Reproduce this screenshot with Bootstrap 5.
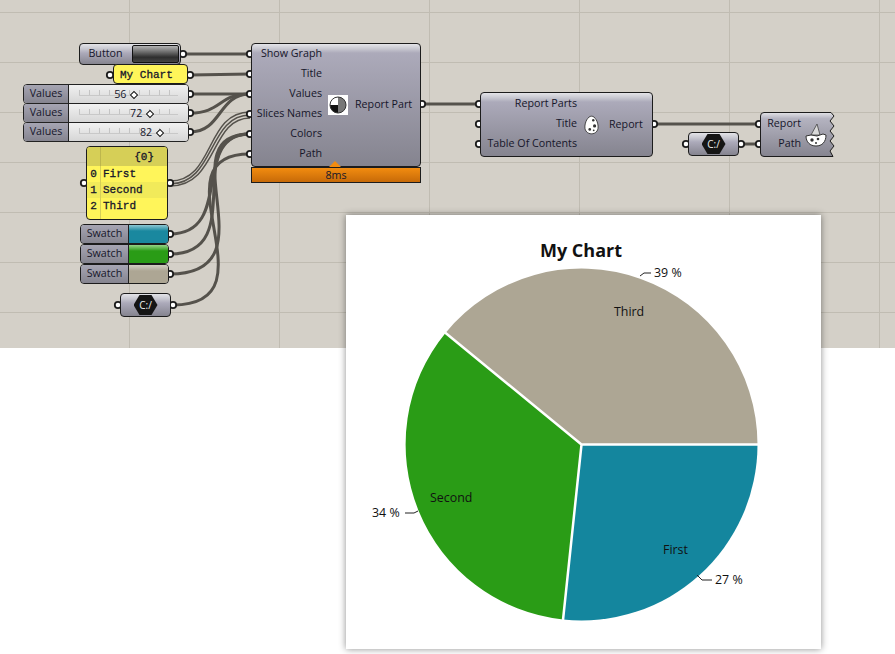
<!DOCTYPE html>
<html lang="en">
<head>
  <meta charset="UTF-8">
  <meta name="viewport" content="width=device-width, initial-scale=1.0">
  <title>My Chart</title>
  <link href="https://cdn.jsdelivr.net/npm/bootstrap@5.3.0/dist/css/bootstrap.min.css" rel="stylesheet">
  <style>
    body { background: #fff; overflow: hidden; }
    .gh-stage { position: relative; width: 895px; height: 654px; overflow: hidden; font: 10.7px/20px "Open Sans", sans-serif; color: #16162a; }
    .gh-canvas {
      height: 348px; background-color: #d4d0c8;
      background-image: linear-gradient(#c0bcb2 1px, transparent 1px), linear-gradient(90deg, #c0bcb2 1px, transparent 1px);
      background-size: 150px 50px; background-position: 129px 12px;
    }
    .gh-wires { position: absolute; left: 0; top: 0; }
    .gh-node { position: absolute; border: 1px solid #1c1c1c; border-radius: 4px; white-space: nowrap;
      background: linear-gradient(#e4e4e8 0, #c6c6cf 5px, #acaaba 9px, #85848f 100%); }
    .gh-inputs { text-align: right; }

    #n-button { left: 79px; top: 43px; width: 102px; height: 22px; line-height: 18px; }
    #n-button span { margin-top: -2px; }
    .gh-face { width: 47px; height: 18px; margin: 1px; border: 1px solid #111; border-radius: 2px; background: linear-gradient(#b4b4b4, #2e2e2e 70%, #444); }
    #n-title { left: 113px; top: 64px; width: 75px; height: 20px; background: #fff55a; font: 11px/20px "Liberation Mono", monospace; -webkit-text-stroke: .3px #16162a; padding-left: 6px; }
    .gh-slider { left: 23px; width: 166px; height: 20px; border-color: #222; background: #eee; overflow: hidden; }
    #n-s1 { top: 84px; } #n-s2 { top: 103px; } #n-s3 { top: 122px; }
    .gh-lab { background: linear-gradient(#a6a5b3, #85848f); border-right: 1px solid #222; text-align: center; }
    .gh-slider .gh-lab { width: 45px; flex: none; line-height: 17px; }
    .gh-track { position: relative; flex: 1; margin: 0 10px; line-height: 18px;
      background-image: linear-gradient(#c8c8c8, #c8c8c8), repeating-linear-gradient(90deg, #c4c4c4 0 1px, transparent 1px 10px);
      background-size: 101px 1px, 101px 5px; background-repeat: no-repeat; background-position: 0 10px, 0 5px; }
    .gh-body { flex: 1; display: flex; background: linear-gradient(#f1f1f1, #d6d6d6); }
    .gh-val { position: absolute; transform: translateX(-100%); margin-left: -8px; top: 0; }
    .gh-thumb { position: absolute; top: 7px; width: 6px; height: 6px; margin-left: -3px; background: #fff; border: 1.5px solid #111; transform: rotate(45deg); }

    #n-panel { left: 86px; top: 146px; width: 82px; height: 74px; background: #fff55a; font: 11px/17px "Liberation Mono", monospace; -webkit-text-stroke: .3px #16162a; overflow: hidden; }
    .gh-phead { height: 19px; background: #d6cf57; text-align: right; padding-right: 13px; line-height: 21px; }
    .gh-prow { height: 16px; display: flex; }
    .gh-prow.alt { background: #f1ea5a; }
    .gh-idx { width: 14px; flex: none; text-align: center; border-right: 1px solid #d6cf57; margin-right: 2px; }
    .gh-pfoot { height: 7px; width: 14px; border-right: 1px solid #d6cf57; }
    .gh-vline { position: absolute; left: 13px; top: 0; height: 19px; border-right: 1px solid #bdb64d; }

    .gh-swatch { left: 80px; width: 89px; height: 20px; overflow: hidden; }
    #n-c1 { top: 224px; } #n-c2 { top: 244px; } #n-c3 { top: 264px; }
    .gh-swatch .gh-lab { width: 48px; flex: none; line-height: 17px; }
    .gh-chip { flex: 1; }
    .gh-teal { background: linear-gradient(#8cc6d2 0, #1a889f 6px); }
    .gh-green { background: linear-gradient(#96d488 0, #2a9c16 6px); }
    .gh-tan { background: linear-gradient(#d3cfc3 0, #ada694 6px); }

    .gh-path { width: 51px; height: 24px; }
    #n-p1 { left: 120px; top: 293px; } #n-p2 { left: 688px; top: 132px; }
    .gh-hex { width: 24px; height: 20px; background: #151515; color: #eee; clip-path: polygon(25% 0, 75% 0, 100% 50%, 75% 100%, 25% 100%, 0 50%); text-align: center; font: 10px/20px "Open Sans", sans-serif; }

    #n-main { left: 251px; top: 43px; width: 170px; height: 124px; }
    #n-main .gh-inputs { width: 70px; margin-top: -5px; }
    .gh-pie-ico { width: 20px; height: 20px; background: #fff; margin: 0 7px 0 6px; }
    .gh-out { margin-top: -2px; }
    #n-bar { position: absolute; left: 251px; top: 167px; width: 170px; height: 16px; border: 1px solid #1c1c1c; background: linear-gradient(#f28c10, #c76a08); text-align: center; line-height: 15px; }
    #n-tip { position: absolute; left: 329px; top: 161px; width: 12px; height: 6px; background: #f28c10; clip-path: polygon(50% 0, 100% 100%, 0 100%); }

    #n-report { left: 480px; top: 92px; width: 173px; height: 65px; }
    #n-report .gh-inputs { width: 96px; margin-top: -3px; }
    .gh-egg { margin: 0 10px 0 7px; }

    #n-file { position: absolute; left: 760px; top: 112px; width: 75px; height: 45px; }
    #n-file svg.gh-shape { position: absolute; left: 0; top: 0; }
    #n-file .gh-inputs { position: relative; width: 41px; padding-top: 1px; }
    .gh-file-ico { position: absolute; left: 43px; top: 10px; }

    .gh-report { position: absolute; left: 346px; top: 215px; width: 475px; height: 434px; background: #fff; box-shadow: 0 0 7px rgba(0,0,0,.45); }
    .gh-report text { font-family: "Open Sans", sans-serif; font-size: 12.4px; fill: #111; }
    .gh-report .gh-ttl { font-size: 18px; font-weight: 700; }
  </style>
</head>
<body>
  <div class="gh-stage">
    <div class="gh-canvas"></div>

    <svg class="gh-wires" width="895" height="348" fill="none">
      <g stroke="#55524c" stroke-width="3">
        <path d="M183 54H250"/>
        <path d="M190 75L250 74"/>
        <path d="M190 94H250"/>
        <path d="M190 113C222 113 218 94 250 94"/>
        <path d="M190 132C222 132 218 94 250 94"/>
        <path d="M422 104H479"/>
        <path d="M654 124H759"/>
        <path d="M741 144H759"/>
        <path d="M170 234C235 234 190 134 250 134"/>
        <path d="M170 254C250 254 180 134 250 134"/>
        <path d="M170 274C275 274 165 134 250 134"/>
        <path d="M173 305C280 305 150 154 250 154"/>
      </g>
      <g stroke="#55524c" stroke-width="1.5">
        <path d="M170 181C215 181 205 112 250 112"/>
        <path d="M170 184C215 184 208 115 250 115"/>
        <path d="M170 186C218 186 210 118 250 118"/>
      </g>
      <g fill="#fff" stroke="#1c1c1c" stroke-width="1.8">
        <circle cx="183" cy="54" r="3.2"/><circle cx="110" cy="75" r="3.2"/><circle cx="190" cy="75" r="3.2"/>
        <circle cx="190" cy="94" r="3.2"/><circle cx="190" cy="113" r="3.2"/><circle cx="190" cy="132" r="3.2"/>
        <circle cx="84" cy="183" r="3.2"/><circle cx="170" cy="183" r="3.2"/>
        <circle cx="170" cy="234" r="3.2"/><circle cx="170" cy="254" r="3.2"/><circle cx="170" cy="274" r="3.2"/>
        <circle cx="118" cy="305" r="3.2"/><circle cx="173" cy="305" r="3.2"/>
        <circle cx="250" cy="54" r="3.2"/><circle cx="250" cy="74" r="3.2"/><circle cx="250" cy="94" r="3.2"/>
        <circle cx="250" cy="114" r="3.2"/><circle cx="250" cy="134" r="3.2"/><circle cx="250" cy="154" r="3.2"/>
        <circle cx="422" cy="104" r="3.2"/>
        <circle cx="479" cy="104" r="3.2"/><circle cx="479" cy="124" r="3.2"/><circle cx="479" cy="144" r="3.2"/><circle cx="654" cy="124" r="3.2"/>
        <circle cx="686" cy="144" r="3.2"/><circle cx="741" cy="144" r="3.2"/>
        <circle cx="759" cy="124" r="3.2"/><circle cx="759" cy="144" r="3.2"/>
      </g>
    </svg>

    <div class="gh-node d-flex align-items-center" id="n-button">
      <span class="flex-grow-1 text-center">Button</span>
      <div class="gh-face"></div>
    </div>
    <div class="gh-node" id="n-title">My Chart</div>

    <div class="gh-node gh-slider d-flex" id="n-s1">
      <div class="gh-lab">Values</div>
      <div class="gh-body"><div class="gh-track"><span class="gh-val" style="left:56%">56</span><span class="gh-thumb" style="left:56%"></span></div></div>
    </div>
    <div class="gh-node gh-slider d-flex" id="n-s2">
      <div class="gh-lab">Values</div>
      <div class="gh-body"><div class="gh-track"><span class="gh-val" style="left:72%">72</span><span class="gh-thumb" style="left:72%"></span></div></div>
    </div>
    <div class="gh-node gh-slider d-flex" id="n-s3">
      <div class="gh-lab">Values</div>
      <div class="gh-body"><div class="gh-track"><span class="gh-val" style="left:82%">82</span><span class="gh-thumb" style="left:82%"></span></div></div>
    </div>

    <div class="gh-node" id="n-panel">
      <div class="gh-vline"></div>
      <div class="gh-phead">{0}</div>
      <div class="gh-prow"><span class="gh-idx">0</span>First</div>
      <div class="gh-prow alt"><span class="gh-idx">1</span>Second</div>
      <div class="gh-prow"><span class="gh-idx">2</span>Third</div>
      <div class="gh-pfoot"></div>
    </div>

    <div class="gh-node gh-swatch d-flex" id="n-c1"><div class="gh-lab">Swatch</div><div class="gh-chip gh-teal"></div></div>
    <div class="gh-node gh-swatch d-flex" id="n-c2"><div class="gh-lab">Swatch</div><div class="gh-chip gh-green"></div></div>
    <div class="gh-node gh-swatch d-flex" id="n-c3"><div class="gh-lab">Swatch</div><div class="gh-chip gh-tan"></div></div>

    <div class="gh-node gh-path d-flex align-items-center justify-content-center" id="n-p1"><div class="gh-hex">C:/</div></div>

    <div class="gh-node d-flex align-items-center" id="n-main">
      <div class="gh-inputs">
        <div>Show Graph</div><div>Title</div><div>Values</div><div>Slices Names</div><div>Colors</div><div>Path</div>
      </div>
      <div class="gh-pie-ico d-flex align-items-center justify-content-center">
        <svg width="18" height="18" viewBox="0 0 18 18">
          <circle cx="9" cy="9" r="8" fill="#fff"/>
          <path d="M9 1A8 8 0 0 1 9 17Z" fill="#777"/>
          <path d="M9 9V17A8 8 0 0 1 1 9Z" fill="#111"/>
          <circle cx="9" cy="9" r="8" fill="none" stroke="#333" stroke-width="1"/>
        </svg>
      </div>
      <div class="gh-out">Report Part</div>
    </div>
    <div id="n-tip"></div>
    <div id="n-bar">8ms</div>

    <div class="gh-node d-flex align-items-center" id="n-report">
      <div class="gh-inputs"><div>Report Parts</div><div>Title</div><div>Table Of Contents</div></div>
      <svg class="gh-egg" width="15" height="20" viewBox="0 0 17 22">
        <path d="M8.5 1C12.5 1 16 7.5 16 13.2C16 18 12.8 21 8.5 21C4.2 21 1 18 1 13.2C1 7.5 4.5 1 8.5 1Z" fill="#fff" stroke="#333"/>
        <circle cx="10.5" cy="5.5" r="1.4" fill="#333"/><circle cx="12" cy="12" r="1.8" fill="#333"/>
        <circle cx="6.5" cy="16" r="1.5" fill="#333"/><circle cx="11" cy="17" r="1" fill="#333"/>
      </svg>
      <div class="gh-out">Report</div>
    </div>

    <div class="gh-node gh-path d-flex align-items-center justify-content-center" id="n-p2"><div class="gh-hex">C:/</div></div>

    <div id="n-file">
      <svg class="gh-shape" width="75" height="45" viewBox="0 0 75 45">
        <defs>
          <linearGradient id="gh-fill" x1="0" y1="0" x2="0" y2="1">
            <stop offset="0" stop-color="#e4e4e8"/><stop offset=".14" stop-color="#b4b3c0"/><stop offset="1" stop-color="#85848f"/>
          </linearGradient>
        </defs>
        <path d="M4 .5H71L74 4L70 9L74 14L70 19L74 24L70 29L74 34L70 39L73 44.5H4Q.5 44.5 .5 41V4Q.5 .5 4 .5Z" fill="url(#gh-fill)" stroke="#1c1c1c"/>
      </svg>
      <div class="gh-inputs"><div>Report</div><div>Path</div></div>
      <svg class="gh-file-ico" width="26" height="26" viewBox="0 0 26 26">
        <path d="M14 2L17 13L8 13Z" fill="#d9d9d9" stroke="#444" stroke-width=".8"/>
        <path d="M3 14L8 13L14 14L20 12L23 13C23 20 19 24 13 24C7 24 3 20 3 14Z" fill="#fff" stroke="#333"/>
        <circle cx="9" cy="18" r="1.7" fill="#333"/><circle cx="15" cy="17" r="1.3" fill="#333"/><circle cx="13" cy="21" r="1" fill="#333"/>
      </svg>
    </div>

    <div class="gh-report">
      <svg width="475" height="434" viewBox="346 215 475 434">
        <text class="gh-ttl" x="581" y="257" text-anchor="middle">My Chart</text>
        <path d="M581.5 444.5H757.5A176 176 0 0 1 563.1 619.5Z" fill="#14869e"/>
        <path d="M581.5 444.5L563.1 619.5A176 176 0 0 1 445.5 332.9Z" fill="#2a9c16"/>
        <path d="M581.5 444.5L445.5 332.9A176 176 0 0 1 757.5 444.5Z" fill="#ada694"/>
        <path d="M758 444.5H581.5L563 620M581.5 444.5L445 332.5" fill="none" stroke="#fff" stroke-width="2.5"/>
        <g fill="none" stroke="#222" stroke-width="1">
          <path d="M640 276L644 273H651"/>
          <path d="M405 513H414L418 511"/>
          <path d="M697 575L702 580H712"/>
        </g>
        <text x="654" y="277">39 %</text>
        <text x="614" y="316">Third</text>
        <text x="430" y="502">Second</text>
        <text x="372" y="517">34 %</text>
        <text x="663" y="554">First</text>
        <text x="715" y="584">27 %</text>
      </svg>
    </div>
  </div>

  <script src="https://cdn.jsdelivr.net/npm/bootstrap@5.3.0/dist/js/bootstrap.bundle.min.js"></script>
</body>
</html>
